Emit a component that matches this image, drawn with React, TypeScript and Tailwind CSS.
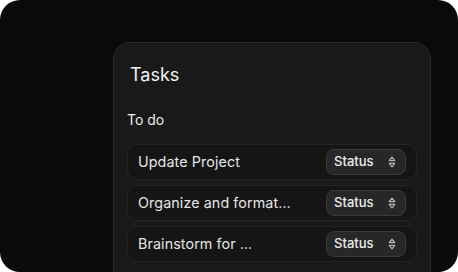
const tasks = ["Update Project", "Organize and format…", "Brainstorm for …"];

const SortIcon = () => (
  <svg width="10" height="14" viewBox="0 0 10 14" fill="none" stroke="currentColor" strokeWidth="1.2" strokeLinejoin="round">
    <path d="M2.2 5.6 L5 2.2 L7.8 5.6 Z" />
    <path d="M2.2 8.4 L5 11.8 L7.8 8.4 Z" />
  </svg>
);

export default function App() {
  return (
    <div className="w-[458px] h-[272px] bg-white">
      <div className="w-[458px] h-[272px] rounded-[20px] bg-[#0a0a0a] overflow-hidden pt-[42px] pl-[113px] font-['Inter',sans-serif]">
        <div className="w-[318px] h-[260px] rounded-[16px] border border-[#282828] bg-[#191919] px-[13px] pt-[20px]">
          <h2 className="pl-[3px] text-[18px] leading-[24px] text-[#f2f2f2]">Tasks</h2>
          <p className="mt-[23px] text-[14px] leading-[20px] text-[#ececec]">To do</p>
          <div className="mt-[14px] flex flex-col gap-[5px]">
            {tasks.map((t) => (
              <div
                key={t}
                className="h-[36px] rounded-[10px] border border-[#242424] bg-[#151515] pl-[10px] pr-[10px] flex items-center justify-between"
              >
                <span className="text-[14.3px] tracking-[0.1px] text-[#e6e6e6]">{t}</span>
                <button className="w-[80px] h-[26px] rounded-[8px] border border-[#3a3a3a] bg-[#272727] pl-[7px] pr-[8px] flex items-center justify-between text-[13px] font-medium text-[#ececec]">
                  Status
                  <span className="text-[#b5b5b5]">
                    <SortIcon />
                  </span>
                </button>
              </div>
            ))}
          </div>
        </div>
      </div>
    </div>
  );
}
